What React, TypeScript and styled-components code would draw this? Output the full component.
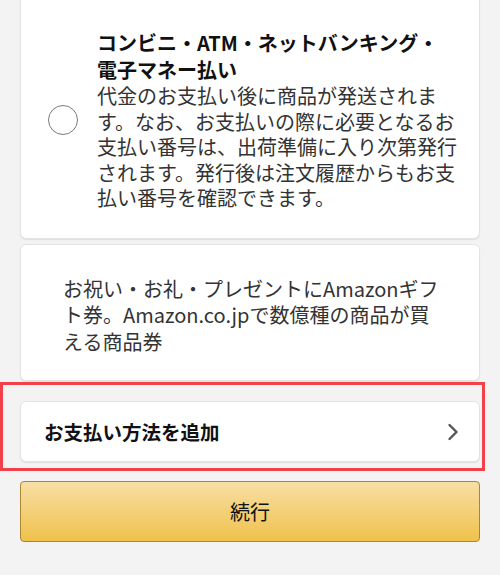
import React from 'react';
import styled, { createGlobalStyle } from 'styled-components';

const GlobalStyle = createGlobalStyle`
  html, body {
    margin: 0;
    padding: 0;
    background: #f3f3f3;
    overflow: hidden;
  }
  body {
    font-family: 'Noto Sans CJK JP', 'Noto Sans', sans-serif;
    color: #111;
  }
`;

const Page = styled.div`
  width: 500px;
  height: 575px;
  display: flex;
  flex-direction: column;
  padding: 0 20px;
  box-sizing: border-box;
`;

const Card = styled.div<{ $clipped?: boolean }>`
  background: #fff;
  border: 1px solid #e3e3e3;
  border-radius: ${(p) => (p.$clipped ? '0 0 6px 6px' : '6px')};
  border-top-width: ${(p) => (p.$clipped ? 0 : 1)}px;
  box-shadow: 0 1px 1px rgba(0, 0, 0, 0.08);
  box-sizing: border-box;
`;

const OptionCard = styled(Card)`
  display: flex;
  align-items: center;
  gap: 19px;
  padding: 29px 16px 27px 27px;
  margin-bottom: 5px;
`;

const Radio = styled.span`
  flex: none;
  width: 30px;
  height: 30px;
  border-radius: 50%;
  border: 1.5px solid #7a7a7a;
  box-sizing: border-box;
`;

const OptionBody = styled.div`
  width: 364px;
`;

const OptionTitle = styled.div`
  font-size: 20px;
  font-weight: 700;
  line-height: 27px;
  color: #111;
`;

const OptionText = styled.div`
  font-size: 20px;
  line-height: 25.5px;
  color: #333;
`;

const GiftCard = styled(Card)`
  padding: 31px 40px 25px 42px;
  font-size: 20px;
  line-height: 26.5px;
  color: #333;
`;

const Highlight = styled.div`
  margin: 1px -5px 0 -20px;
  padding: 16px 2px 6px 17px;
  border: 3px solid #f2414b;
`;

const AddRow = styled(Card)`
  height: 61px;
  display: flex;
  align-items: center;
  justify-content: space-between;
  padding: 0 20px 0 23px;
  font-size: 19.5px;
  font-weight: 700;
  color: #111;
`;

const Chevron = styled.svg`
  width: 12px;
  height: 18px;
`;

const ContinueButton = styled.button`
  margin-top: 10px;
  height: 61px;
  width: 100%;
  border: 1px solid #a88734;
  border-radius: 4px;
  background: linear-gradient(to bottom, #f7dfa5, #f0c14b);
  font-family: inherit;
  font-size: 20px;
  color: #111;
  cursor: pointer;
`;

const App: React.FC = () => {
  return (
    <>
      <GlobalStyle />
      <Page>
        <OptionCard $clipped>
          <Radio />
          <OptionBody>
            <OptionTitle>
              コンビニ・ATM・ネットバンキング・
              <br />
              電子マネー払い
            </OptionTitle>
            <OptionText>
              代金のお支払い後に商品が発送されます。なお、お支払いの際に必要となるお支払い番号は、出荷準備に入り次第発行されます。発行後は注文履歴からもお支払い番号を確認できます。
            </OptionText>
          </OptionBody>
        </OptionCard>

        <GiftCard>
          お祝い・お礼・プレゼントにAmazonギフト券。Amazon.co.jpで数億種の商品が買える商品券
        </GiftCard>

        <Highlight>
          <AddRow>
            <span>お支払い方法を追加</span>
            <Chevron viewBox="0 0 12 18">
              <path d="M2.5 2 L9.5 9 L2.5 16" fill="none" stroke="#555" strokeWidth="2.4" strokeLinecap="round" strokeLinejoin="round" />
            </Chevron>
          </AddRow>
        </Highlight>

        <ContinueButton>続行</ContinueButton>
      </Page>
    </>
  );
};

export default App;
